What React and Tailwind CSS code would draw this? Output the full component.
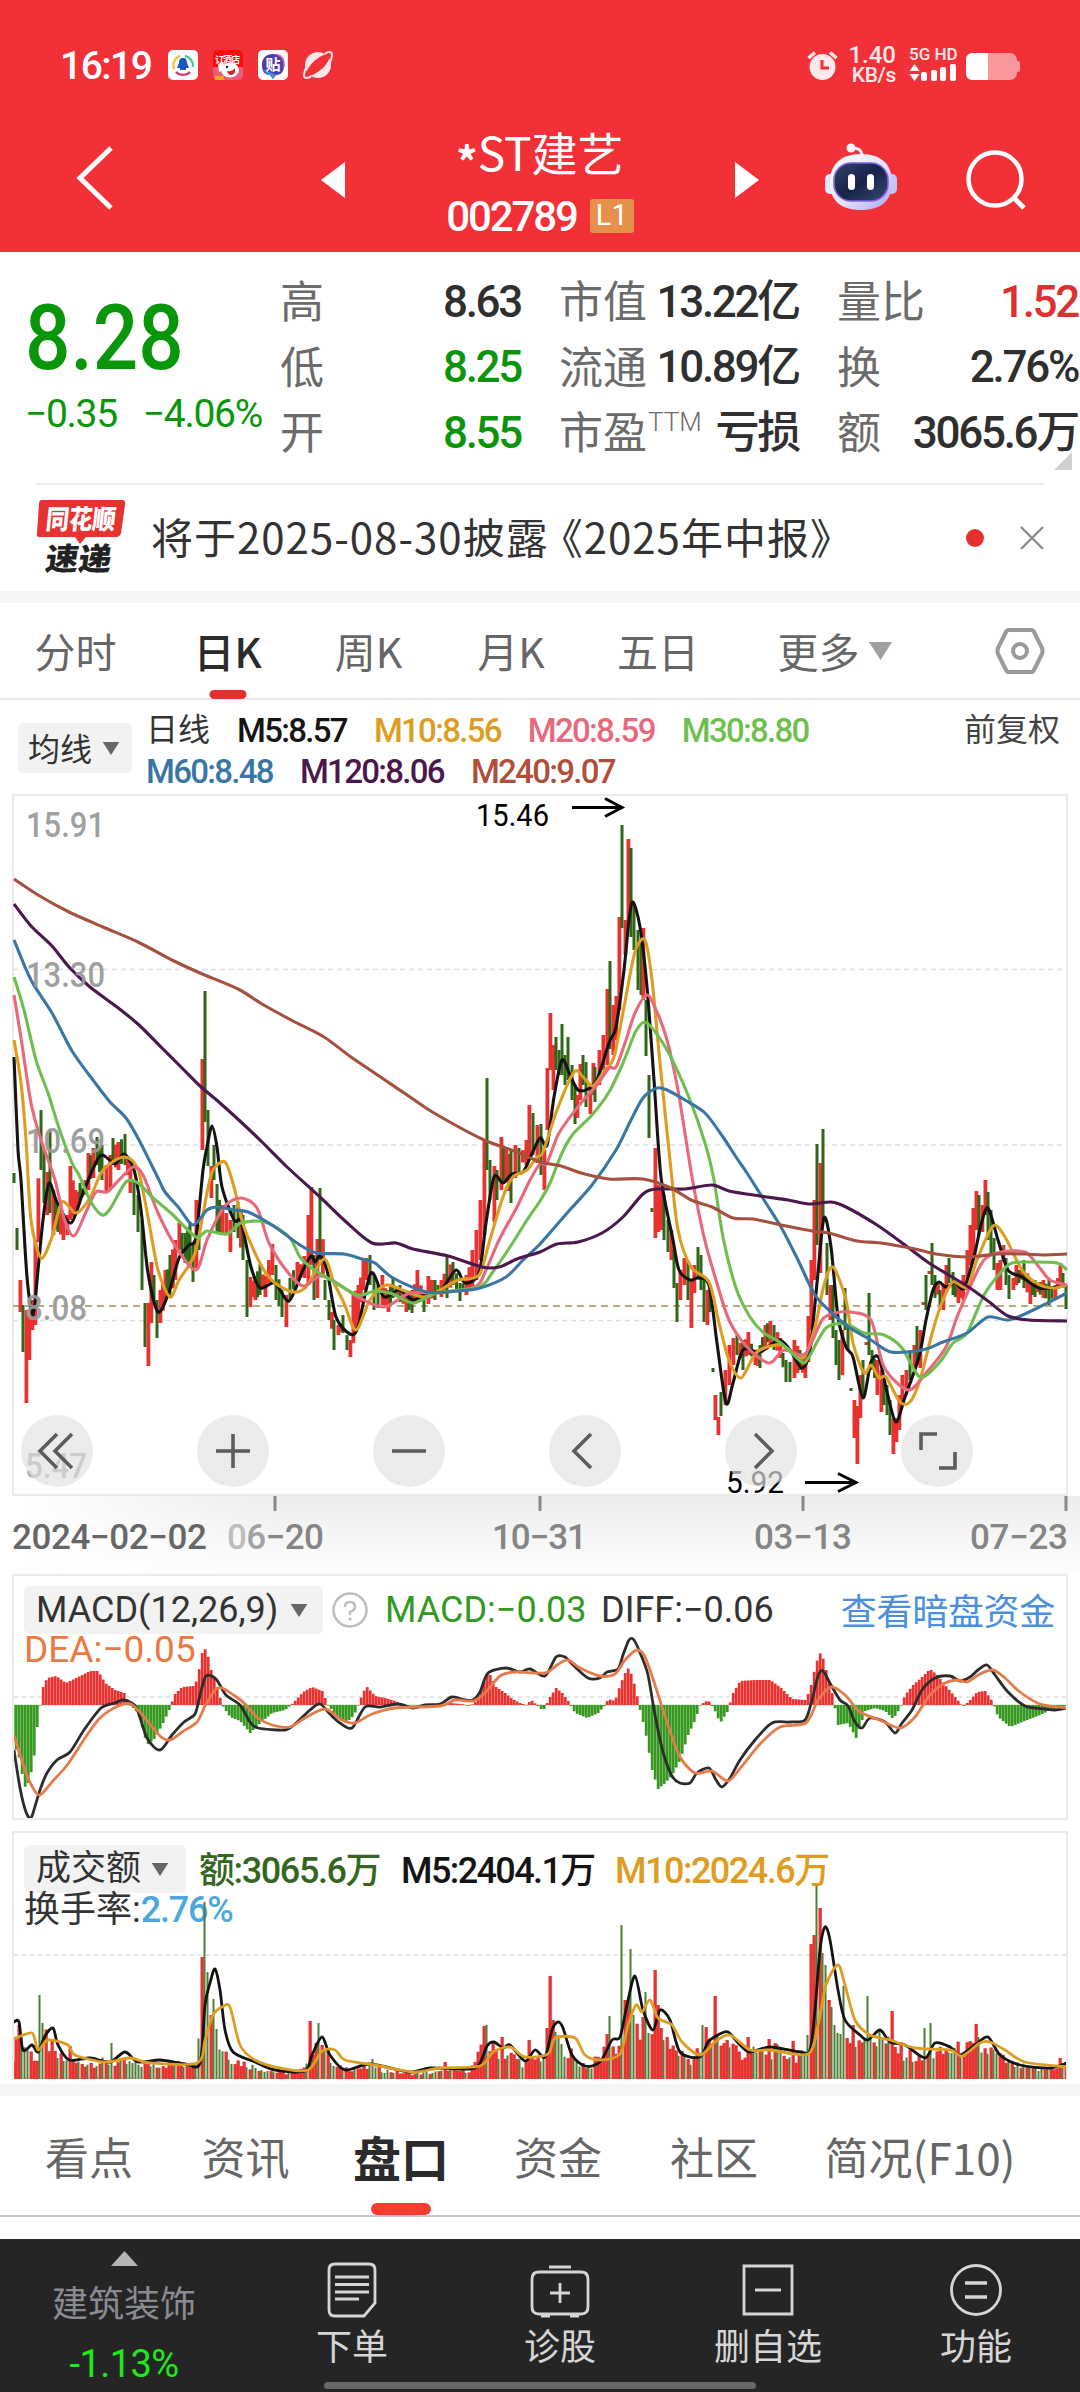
import React from 'react';
import clsx from 'clsx';

const RED = '#e73230';
const GREEN = '#2f6618';

// moving averages of the K chart, as x,y points
const maLines = [
  {
    color: '#141414',
    points:
      '14,1057 18,1150 21,1180 27,1277 33,1315 38,1270 43,1220 49,1183 57,1202 71,1223 83,1193 100,1156 115,1164 124,1154 134,1170 141,1210 148,1273 158,1312 169,1292 179,1258 189,1245 196,1237 203,1170 207,1147 212,1126 217,1147 222,1187 234,1220 241,1222 251,1267 260,1288 275,1283 289,1301 303,1270 311,1256 315,1262 320,1256 327,1270 336,1317 350,1334 358,1327 371,1273 384,1297 399,1290 413,1300 425,1294 441,1290 456,1270 465,1283 479,1273 486,1223 494,1177 503,1183 512,1174 523,1172 530,1158 540,1138 547,1145 554,1097 562,1060 570,1075 578,1090 588,1089 597,1080 609,1043 616,1027 624,970 629,920 633,902 640,927 647,987 654,1080 661,1177 673,1240 679,1270 690,1280 698,1278 709,1285 717,1343 726,1403 733,1383 743,1350 760,1352 779,1340 790,1350 802,1368 810,1350 817,1283 824,1218 831,1247 838,1317 846,1347 853,1357 863,1398 871,1362 879,1358 887,1392 896,1422 905,1397 919,1357 926,1320 933,1290 939,1282 946,1287 955,1283 964,1288 974,1257 981,1225 988,1208 998,1240 1008,1270 1022,1277 1039,1288 1057,1287 1067,1285',
  },
  {
    color: '#dd9d22',
    points:
      '14,1040 21,1083 26,1140 31,1220 41,1258 52,1237 62,1202 76,1213 90,1198 103,1170 124,1157 138,1170 148,1217 158,1270 170,1297 179,1280 195,1253 207,1193 213,1170 225,1162 234,1187 244,1227 262,1267 275,1283 293,1292 306,1287 324,1259 334,1283 344,1303 356,1330 370,1300 386,1285 405,1291 424,1297 440,1290 458,1280 479,1275 489,1243 503,1197 513,1177 527,1170 537,1157 543,1152 557,1110 574,1072 584,1078 593,1086 605,1070 614,1057 624,1007 635,952 645,940 652,980 660,1063 671,1170 678,1230 691,1267 709,1282 719,1323 729,1360 741,1378 757,1352 781,1345 803,1358 815,1327 824,1285 833,1267 846,1300 853,1343 864,1373 871,1365 879,1378 886,1377 900,1402 910,1402 920,1380 933,1330 943,1300 953,1282 967,1287 977,1260 993,1226 1005,1237 1022,1270 1038,1284 1053,1288 1067,1285',
  },
  {
    color: '#e7697b',
    points:
      '14,995 21,1038 31,1103 41,1140 55,1180 64,1218 74,1236 86,1212 96,1192 107,1192 119,1180 133,1167 143,1175 158,1213 176,1247 196,1270 207,1240 224,1207 241,1198 257,1208 269,1243 286,1270 303,1286 320,1276 337,1283 358,1297 384,1307 410,1293 437,1293 475,1287 486,1270 499,1240 517,1207 530,1180 540,1164 547,1163 559,1133 581,1103 597,1085 609,1068 616,1067 626,1040 635,1013 647,995 657,1012 667,1040 678,1090 692,1177 704,1237 716,1280 729,1320 747,1347 769,1363 784,1350 805,1354 822,1320 836,1313 850,1312 871,1320 884,1367 908,1390 926,1373 946,1347 957,1317 970,1287 984,1260 1001,1252 1025,1252 1039,1267 1050,1280 1067,1285',
  },
  {
    color: '#6fbf50',
    points:
      '14,977 24,1010 36,1060 48,1093 59,1128 72,1163 79,1175 91,1202 102,1215 110,1209 126,1182 138,1183 152,1197 172,1214 196,1237 207,1231 227,1234 241,1223 265,1222 289,1237 300,1257 313,1269 331,1280 358,1295 375,1291 393,1294 413,1303 437,1293 479,1287 492,1273 510,1247 527,1220 540,1201 550,1183 562,1153 573,1134 592,1115 609,1092 623,1063 636,1031 647,1023 667,1050 688,1095 705,1143 714,1180 723,1237 736,1288 750,1317 764,1333 781,1343 802,1362 809,1357 826,1328 846,1324 864,1333 884,1335 902,1348 920,1377 939,1363 953,1343 967,1333 984,1295 1001,1272 1012,1263 1030,1262 1057,1263 1067,1270',
  },
  {
    color: '#3a76a3',
    points:
      '14,940 31,980 52,1013 72,1051 93,1080 110,1102 126,1118 139,1140 158,1178 165,1192 179,1208 193,1225 207,1210 217,1207 234,1210 248,1212 272,1225 300,1245 317,1253 344,1254 362,1259 375,1263 393,1278 427,1292 458,1291 480,1288 506,1277 523,1260 540,1244 568,1212 592,1185 616,1150 630,1122 643,1098 657,1088 667,1090 685,1100 705,1113 723,1137 736,1157 747,1173 764,1200 781,1227 798,1260 815,1295 833,1314 850,1328 871,1340 891,1352 922,1350 943,1342 967,1333 988,1317 1008,1320 1029,1312 1067,1293',
  },
  {
    color: '#4b174d',
    points:
      '14,904 31,926 52,946 69,967 90,987 117,1007 139,1025 162,1048 183,1069 200,1086 220,1103 241,1122 262,1142 286,1166 320,1197 344,1220 372,1243 396,1243 413,1249 448,1256 482,1267 499,1267 517,1259 540,1252 557,1244 578,1242 602,1233 623,1217 643,1194 657,1189 685,1189 712,1185 729,1191 760,1196 788,1200 809,1204 831,1202 846,1207 877,1225 905,1245 929,1263 967,1286 988,1301 1008,1316 1029,1320 1067,1321',
  },
  {
    color: '#a4523f',
    points:
      '14,879 38,895 69,912 103,927 138,942 172,960 200,973 238,989 262,1004 293,1021 324,1037 351,1057 382,1078 413,1099 434,1113 482,1139 517,1152 540,1162 561,1166 581,1173 609,1179 643,1179 671,1188 691,1200 712,1207 733,1218 753,1219 781,1225 812,1231 829,1233 857,1241 881,1243 915,1249 936,1254 967,1257 998,1254 1025,1254 1043,1255 1067,1254',
  },
];

// x, high, low, r(ise) / g(fall)
const candleData = `14,1173,1183,g 17,1228,1250,g 20,1280,1312,r 23,1305,1352,g 26,1310,1403,r 29,1315,1360,r 32,1300,1330,r 35,1240,1325,r
41,1110,1170,g 44,1150,1203,g 47,1172,1215,r 50,1130,1213,g 53,1190,1235,r 58,1205,1232,g 63,1215,1240,r 67,1215,1235,r 70,1166,1220,r 75,1190,1215,r
80,1183,1200,g 85,1180,1195,r 88,1153,1190,r 93,1148,1178,r 97,1137,1165,g 102,1145,1180,g 106,1165,1192,r 110,1155,1188,r 113,1138,1165,g 118,1142,1170,r
125,1134,1165,g 130,1165,1193,r 134,1180,1215,g 138,1195,1232,g 142,1220,1290,g 145,1303,1347,g 148,1303,1366,r 151,1262,1323,r 154,1275,1300,g 157,1300,1338,g
160,1290,1323,r 165,1270,1300,r 170,1255,1298,g 175,1240,1280,r 179,1223,1250,r 185,1233,1263,g 190,1222,1265,g 193,1245,1282,g 196,1200,1268,r 199,1225,1250,g
202,1059,1150,r 205,991,1122,g 208,1110,1166,g 211,1166,1198,r 214,1145,1180,g 217,1184,1232,g 222,1205,1235,r 226,1213,1235,r 230,1220,1252,r 234,1205,1232,g
238,1202,1238,g 243,1215,1260,g 247,1260,1317,g 250,1277,1307,r 255,1276,1300,r 260,1264,1295,g 265,1276,1297,r 272,1244,1275,r 276,1265,1300,g 282,1290,1317,g
286,1295,1327,r 290,1278,1300,g 297,1262,1285,r 304,1256,1278,r 308,1215,1285,r 311,1187,1265,r 314,1255,1300,g 317,1239,1298,r 320,1188,1260,g 325,1280,1300,g
329,1300,1320,g 334,1320,1350,g 338,1325,1335,r 343,1315,1333,g 347,1335,1350,g 350,1340,1357,r 353,1295,1343,r 358,1285,1320,r 363,1258,1290,r 366,1258,1280,r
370,1255,1285,g 374,1275,1310,g 378,1285,1308,g 382,1275,1305,r 388,1290,1312,r 393,1278,1298,g 400,1285,1302,g 406,1292,1312,r 412,1290,1313,g 417,1270,1300,r
424,1290,1312,g 428,1276,1304,r 435,1280,1300,g 441,1280,1297,r 447,1257,1298,g 453,1262,1285,g 460,1283,1301,g 466,1275,1295,r 472,1250,1290,r 476,1230,1280,r
480,1200,1260,r 484,1140,1235,r 487,1078,1170,g 490,1160,1200,g 494,1166,1222,r 497,1170,1200,g 501,1137,1190,r 506,1147,1180,r 511,1150,1203,g 515,1145,1178,r
519,1148,1172,g 526,1140,1165,r 529,1105,1160,r 533,1113,1155,g 537,1125,1163,r 541,1124,1175,g 544,1150,1190,r 547,1068,1130,r 550,1013,1070,r 553,1045,1090,r
556,1037,1070,g 559,1050,1075,g 562,1024,1075,g 565,1055,1085,g 568,1037,1080,g 572,1065,1100,g 575,1085,1124,g 577,1095,1118,r 580,1064,1100,r 583,1055,1085,g
586,1062,1107,g 590,1085,1114,r 593,1063,1095,r 595,1067,1102,g 599,1050,1085,r 603,1035,1070,r 607,989,1065,r 610,961,1049,g 613,1005,1055,r 616,996,1040,r
619,917,1010,r 622,825,928,g 625,920,955,r 628,839,925,r 631,848,937,g 634,905,950,g 638,930,990,g 641,940,995,g 643,928,1000,r 646,1000,1056,g
649,1075,1138,g 652,1208,1212,g 655,1148,1238,r 658,1185,1232,r 661,1190,1230,r 664,1195,1240,g 668,1220,1252,g 671,1230,1260,r 674,1250,1288,g 677,1283,1322,g
680,1270,1300,r 684,1258,1285,r 688,1262,1300,g 691,1280,1328,r 694,1265,1293,r 698,1247,1278,g 701,1255,1290,g 704,1280,1322,g 707,1290,1325,r 710,1285,1312,g
713,1368,1372,g 715,1395,1420,r 718,1417,1435,r 721,1392,1416,g 725,1370,1405,r 729,1345,1385,r 733,1338,1365,r 737,1335,1355,g 743,1340,1370,g 748,1332,1355,r
755,1350,1365,r 760,1345,1368,g 765,1325,1350,r 770,1321,1345,r 774,1325,1350,g 780,1338,1358,r 786,1360,1382,g 790,1362,1382,g 794,1340,1378,r 800,1350,1370,g
805,1355,1378,r 808,1316,1362,r 811,1260,1330,r 814,1200,1280,r 817,1144,1245,g 820,1163,1273,r 823,1129,1220,g 827,1243,1295,g 830,1285,1320,r 833,1285,1338,g
836,1330,1365,g 839,1340,1380,g 842,1330,1375,r 845,1288,1330,g 848,1325,1350,g 851,1388,1391,g 854,1400,1438,r 857,1406,1464,r 860,1375,1418,r 863,1360,1395,g
866,1342,1345,r 869,1293,1355,g 872,1350,1370,g 877,1360,1395,r 881,1370,1412,r 884,1380,1405,g 887,1385,1415,g 890,1400,1435,g 893,1418,1454,r 896,1418,1442,r
899,1395,1430,r 902,1375,1405,r 906,1370,1390,r 910,1350,1380,g 914,1345,1368,r 917,1326,1365,g 920,1330,1368,r 923,1302,1304,r 926,1275,1310,g 929,1271,1273,r
932,1243,1285,g 935,1275,1298,g 940,1290,1305,g 943,1285,1310,r 946,1265,1290,r 949,1258,1283,g 953,1272,1295,g 958,1285,1303,r 963,1275,1300,r 967,1250,1290,r
970,1225,1265,r 973,1208,1260,r 976,1191,1230,r 979,1195,1235,g 982,1205,1232,r 985,1180,1215,r 988,1192,1240,g 991,1210,1255,g 994,1238,1270,g 997,1263,1290,r
1000,1260,1290,r 1003,1245,1262,r 1006,1258,1285,g 1009,1275,1299,g 1013,1278,1290,r 1016,1265,1285,r 1019,1270,1283,g 1024,1260,1288,g 1030,1283,1304,r 1035,1280,1297,g
1043,1280,1298,r 1049,1280,1305,g 1055,1285,1300,r 1060,1263,1285,r 1063,1273,1285,g 1066,1285,1309,g`;

const macdHist =
  '12,-34 20,-55 24,-83 28,-78 33,-60 37,-22 40,0 43,18 47,27 56,29 66,22 78,28 90,34 98,34 105,22 115,15 124,12 130,0 138,-8 147,-40 155,-33 163,-18 170,-3 174,10 182,18 193,19 197,25 202,52 206,57 211,35 217,18 222,0 230,-12 240,-16 250,-28 260,-18 272,-8 285,-5 293,2 303,13 312,18 322,14 328,0 337,-12 347,-17 354,-10 360,5 366,19 375,9 385,7 395,4 405,0 425,-1 440,0 450,2 462,1 470,-1 476,4 482,18 488,34 496,18 505,12 512,6 520,2 526,0 531,5 537,0 543,-6 550,8 556,17 562,12 568,4 575,-8 587,-13 598,-8 605,0 608,6 615,4 620,20 625,32 629,38 635,18 640,-5 645,-25 652,-65 658,-84 665,-78 672,-70 680,-55 688,-30 695,-15 700,0 708,5 714,-4 720,-18 727,-7 733,12 740,24 755,25 770,25 780,18 792,6 806,5 811,20 816,42 821,54 826,35 833,8 838,-20 848,-18 856,-33 865,-6 875,-3 885,-6 893,-14 900,-3 905,10 913,20 922,28 930,36 937,30 945,20 955,8 963,-2 970,5 977,13 985,14 992,4 998,-12 1010,-22 1022,-17 1040,-10 1050,-5 1066,-1';
const diffLine =
  '14,1750 20,1788 26,1812 31,1818 36,1803 41,1787 47,1773 57,1760 70,1752 84,1730 101,1708 115,1703 124,1700 136,1707 147,1738 160,1750 172,1735 184,1722 195,1714 200,1695 206,1676 216,1679 226,1695 240,1705 250,1722 258,1728 285,1730 295,1724 310,1710 320,1704 330,1714 340,1723 352,1728 365,1707 380,1707 398,1704 413,1708 425,1705 440,1704 452,1697 465,1700 473,1700 480,1692 488,1673 506,1668 520,1672 530,1669 545,1676 556,1657 565,1657 573,1665 588,1678 600,1678 607,1672 618,1669 623,1655 629,1640 634,1640 641,1655 648,1675 655,1715 663,1752 672,1776 680,1783 690,1783 697,1773 709,1768 716,1780 722,1787 730,1778 740,1760 755,1740 772,1723 790,1722 805,1720 812,1700 818,1676 823,1671 831,1685 840,1700 848,1706 855,1722 862,1728 870,1718 885,1722 895,1733 902,1723 912,1710 922,1690 935,1678 950,1676 960,1681 970,1677 978,1670 987,1665 995,1675 1008,1692 1025,1706 1045,1709 1055,1710 1067,1708';
const deaLine =
  '14,1735 25,1770 33,1788 40,1795 52,1782 68,1764 85,1738 100,1718 118,1706 131,1704 145,1718 160,1736 170,1740 182,1732 197,1722 205,1706 215,1690 222,1688 235,1696 245,1704 258,1718 272,1725 290,1727 305,1718 325,1709 342,1720 355,1723 372,1714 395,1708 440,1706 455,1700 473,1701 485,1693 500,1676 515,1672 545,1673 557,1665 568,1660 580,1668 600,1676 615,1674 625,1660 637,1650 645,1657 655,1685 668,1725 680,1757 695,1773 712,1771 728,1781 742,1766 760,1744 780,1727 806,1723 818,1700 831,1687 845,1695 860,1712 880,1720 900,1728 915,1717 930,1695 945,1683 958,1680 967,1682 980,1674 993,1670 1005,1678 1020,1692 1040,1704 1067,1708';

const vol5 =
  '14,2022 19,2022 23,2050 32,2045 38,2052 45,2036 53,2028 58,2045 69,2060 90,2058 110,2062 125,2052 138,2062 160,2060 185,2064 200,2063 205,2005 210,1983 215,1969 220,1990 225,2030 233,2052 255,2062 275,2070 305,2071 312,2055 322,2037 330,2055 345,2070 370,2064 410,2072 430,2068 470,2069 480,2063 487,2046 494,2042 503,2048 510,2045 525,2061 535,2050 545,2057 552,2030 558,2022 563,2028 572,2055 585,2066 600,2062 612,2040 620,2037 627,2005 635,1976 643,2010 653,2030 660,2010 670,2020 680,2052 700,2057 708,2042 718,2035 728,2032 740,2045 750,2052 770,2047 800,2052 810,2050 815,2010 820,1950 825,1927 830,1940 838,1990 845,2020 860,2035 868,2040 880,2030 890,2042 905,2045 925,2058 935,2043 950,2047 960,2055 975,2045 988,2037 1000,2055 1020,2065 1050,2068 1067,2063';
const vol10 =
  '14,2039 32,2033 38,2050 48,2040 68,2045 75,2055 105,2062 130,2058 150,2063 197,2063 205,2040 213,2015 222,2007 230,2007 240,2045 255,2060 280,2068 308,2070 322,2051 335,2050 345,2060 375,2065 413,2072 440,2068 480,2066 493,2052 510,2047 525,2057 548,2054 555,2038 575,2038 585,2055 600,2060 620,2054 628,2025 636,2005 642,2012 650,2000 658,2018 672,2025 682,2042 700,2055 715,2042 730,2035 750,2050 770,2050 808,2054 818,2025 826,1985 838,1965 845,1985 855,2020 870,2035 890,2040 915,2048 950,2050 962,2056 980,2043 990,2042 1005,2050 1025,2062 1067,2067';
// level of the everyday volume bars, the big days are in volSpikes
const volBase =
  '14,2050 20,2035 30,2052 37,2058 45,2035 55,2055 70,2063 110,2062 140,2064 195,2064 202,2030 220,2045 235,2060 255,2067 280,2073 300,2073 310,2050 325,2050 335,2068 370,2068 410,2074 470,2070 485,2045 510,2055 525,2063 545,2055 560,2038 575,2060 590,2067 605,2050 620,2045 635,2035 650,2040 670,2045 690,2060 705,2045 720,2037 745,2055 770,2050 805,2057 811,2010 820,2000 830,2020 845,2035 870,2035 890,2045 920,2060 950,2050 975,2048 990,2050 1010,2064 1040,2070 1066,2064';
const volSpikes = `19,2025,r 40,1995,g 43,2023,g 70,2046,r 112,2043,g 202,1957,r 205,1902,g 208,1972,g 211,2015,r 214,1999,g 217,2029,g 310,2021,r 320,2023,g 323,2045,r
373,2059,g 445,2062,r 485,2026,r 488,2025,g 501,2037,r 530,2040,r 547,2028,r 550,1976,r 553,2020,r 556,2032,g 562,2044,g 607,2034,r 610,2016,g 622,1925,g 625,2000,r 628,2000,r 631,1949,g 634,2015,g 643,2017,r
646,1992,g 649,2033,g 655,1970,r 658,2005,r 661,2028,r 664,2040,g 702,2025,g 705,2027,r 715,1996,r 748,2037,r 768,2039,r 793,2041,r 811,1944,r 814,1935,r 817,1886,g 820,1908,r 823,1953,g 826,1965,g 829,2000,r
832,2007,g 835,2025,g 838,2033,g 845,1986,g 853,2025,r 868,1996,g 880,2030,g 892,2011,r 925,2028,g 931,2023,g 976,2024,r 979,2037,g 1060,2058,r`;

const parsePoints = (str) => str.trim().split(/\s+/).map((p) => p.split(',').map(Number));
const parseBars = (str) =>
  str.trim().split(/\s+/).map((p) => {
    const [x, a, b, c] = p.split(',');
    return c ? { x: +x, top: +a, bottom: +b, up: c === 'r' } : { x: +x, top: +a, up: b === 'r' };
  });

const valueAt = (pts, x) => {
  for (let i = 1; i < pts.length; i++) {
    if (x <= pts[i][0]) {
      const [x0, y0] = pts[i - 1];
      const [x1, y1] = pts[i];
      return y0 + ((y1 - y0) * (x - x0)) / (x1 - x0);
    }
  }
  return pts[pts.length - 1][1];
};

// stable pseudo random, 0..1
const rnd = (n) => {
  const v = Math.sin(n * 12.9898) * 43758.5453;
  return v - Math.floor(v);
};

// smooth path through the points
const smooth = (str) => {
  const p = parsePoints(str);
  let d = `M${p[0][0]} ${p[0][1]}`;
  for (let i = 0; i < p.length - 1; i++) {
    const a = p[i - 1] || p[i];
    const b = p[i];
    const c = p[i + 1];
    const e = p[i + 2] || c;
    const k = 7;
    d += `C${b[0] + (c[0] - a[0]) / k} ${b[1] + (c[1] - a[1]) / k} ${c[0] - (e[0] - b[0]) / k} ${c[1] - (e[1] - b[1]) / k} ${c[0]} ${c[1]}`;
  }
  return d;
};

// fill the days between two listed candles
const buildCandles = () => {
  const list = parseBars(candleData);
  const out = [];
  list.forEach((c, i) => {
    out.push(c);
    const n = list[i + 1];
    if (!n) return;
    const gap = n.x - c.x;
    if (gap < 5) return;
    const steps = Math.round(gap / 3);
    for (let s = 1; s < steps; s++) {
      const t = s / steps;
      const x = c.x + gap * t;
      out.push({
        x,
        top: c.top + (n.top - c.top) * t + rnd(x) * 7,
        bottom: c.bottom + (n.bottom - c.bottom) * t - rnd(x + 1) * 7,
        up: rnd(x + 2) > 0.5,
      });
    }
  });
  return out;
};

const candles = buildCandles();
const histPts = parsePoints(macdHist);
const basePts = parsePoints(volBase);
const spikes = parseBars(volSpikes);
const days = Array.from({ length: 352 }, (_, i) => 13 + i * 3);

const volumes = days.map((x, i) => {
  const spike = spikes.find((s) => Math.abs(s.x - x) < 1.5);
  if (spike) return { x, top: spike.top, up: spike.up };
  const h = 2078 - valueAt(basePts, x);
  return { x, top: 2078 - h * (0.65 + rnd(i) * 0.65), up: rnd(i + 500) > 0.42 };
});

const num = "font-['Roboto','Noto_Sans_CJK_SC',sans-serif]";
const cjk = "font-['Noto_Sans_CJK_SC',sans-serif]";

function Caret({ className }) {
  return (
    <svg className={className} viewBox="0 0 18 14">
      <path d="M0 0H18L9 14Z" fill="currentColor" />
    </svg>
  );
}

function StatusBar() {
  return (
    <div className="flex h-[130px] items-start pt-[47px] pr-[60px] pl-[60px] text-white">
      <span className={clsx(num, 'w-[108px] text-[39px] leading-[38px] font-medium tracking-[-1.5px]')}>16:19</span>
      <div className="mt-[3px] flex gap-[15px]">
        <svg className="size-[30px]" viewBox="0 0 30 30">
          <rect width="30" height="30" rx="5" fill="#fff" />
          <path d="M6 19A10 10 0 0 1 12 6" fill="none" stroke="#e8c93c" strokeWidth="2.4" />
          <path d="M17 6A10 10 0 0 1 25 17" fill="none" stroke="#4fc59b" strokeWidth="2.4" />
          <path d="M8 22A10 10 0 0 0 22 22" fill="none" stroke="#d03a6c" strokeWidth="2.4" />
          <path d="M15 8c-3 0-4 2-4 5l-2 5h3v2h6v-2h3l-2-5c0-3-1-5-4-5Z" fill="#1456c4" />
        </svg>
        <svg className="size-[30px]" viewBox="0 0 30 30">
          <rect width="30" height="30" rx="5" fill="#fb0d0d" />
          <path d="M0 17H30V25Q30 30 25 30H5Q0 30 0 25Z" fill="#ec5b78" />
          <text x="2" y="13" fontSize="9" fontWeight="700" fill="#fff" fontFamily="Noto Sans CJK SC" textLength="25">订酒店</text>
          <ellipse cx="17" cy="20" rx="9" ry="7.5" fill="#fff" />
          <path d="M5 14l5-2 2 7-6 3Z" fill="#fff" />
          <circle cx="14" cy="17" r="1.2" fill="#222" />
          <path d="M14 21q5 1 8-3q1 7-4 7q-3 0-4-4Z" fill="#c62828" />
          <rect x="2" y="26" width="9" height="4" fill="#f5a623" />
        </svg>
        <svg className="size-[30px]" viewBox="0 0 30 30">
          <rect width="30" height="30" rx="5" fill="#fff" />
          <path d="M15 4C22 4 26 7 26 15S22 25 18 25L15 29L12 25C7 25 4 22 4 15S8 4 15 4Z" fill="#4d3fa8" />
          <path d="M5 19Q8 25 12 25L15 29L18 25" fill="#3e8fe8" />
          <path d="M20 5Q27 7 26 17" fill="none" stroke="#e25fb0" strokeWidth="1.6" />
          <text x="7.5" y="20" fontSize="15" fontWeight="700" fill="#fff" fontFamily="Noto Sans CJK SC">贴</text>
        </svg>
        <svg className="size-[30px]" viewBox="0 0 30 30">
          <circle cx="15" cy="15" r="13" fill="#ffe6e8" />
          <ellipse cx="15" cy="15" rx="14.500" ry="5.500" transform="rotate(-42 15 15)" fill="#f23038" />
          <path d="M22 3.500Q29 0 29 5Q29 9 26 14" fill="none" stroke="#ffe6e8" strokeWidth="2" />
          <path d="M8 26.500Q1 30 1 25Q1 21 4 16" fill="none" stroke="#ffe6e8" strokeWidth="2" />
        </svg>
      </div>
      <svg className="mt-[4px] ml-auto h-[30px] w-[31px]" viewBox="0 0 31 30">
        <circle cx="15.500" cy="16" r="13" fill="#ffe9ea" />
        <path d="M1.500 7L8 1.500M29.500 7L23 1.500" stroke="#ffe9ea" strokeWidth="3.600" />
        <path d="M15 9V17H22" fill="none" stroke="#f23038" strokeWidth="3" />
      </svg>
      <div className={clsx(num, 'mt-[-2px] ml-[10px] w-[48px] text-right text-[24px] leading-[20px] font-medium text-[#ffe9ea]')}>
        <div>1.40</div>
        <div className="text-[21px] tracking-[-0.3px]">KB/s</div>
      </div>
      <div className="ml-[13px] w-[48px]">
        <div className={clsx(num, 'text-[17px] leading-[15px] font-medium whitespace-nowrap text-[#ffe9ea]')}>5G HD</div>
        <svg className="mt-[2px] h-[17px] w-[48px]" viewBox="0 0 48 17" fill="#fff">
          <path d="M5.500 0L10.500 7H.5ZM5.500 17L10.500 10H.5Z" />
          <rect x="12" y="8" width="6" height="9" rx="2" />
          <rect x="22" y="6" width="6" height="11" rx="2" />
          <rect x="31" y="3" width="6" height="14" rx="2" />
          <rect x="41" y="0" width="6" height="17" rx="2" />
        </svg>
      </div>
      <svg className="mt-[6px] ml-[9px] h-[27px] w-[54px]" viewBox="0 0 54 27">
        <rect width="51" height="27" rx="7" fill="#f8979c" />
        <rect x="50" y="8" width="4" height="11" rx="2" fill="#f8979c" />
        <path d="M22 0H7Q0 0 0 7V20Q0 27 7 27H22Z" fill="#fff" />
      </svg>
    </div>
  );
}

function TitleBar() {
  return (
    <div className="flex h-[122px] items-start pl-[76px] text-white">
      <svg className="mt-[15px] h-[66px] w-[38px]" viewBox="0 0 38 66">
        <path d="M35 3L4 33L35 63" fill="none" stroke="#fff" strokeWidth="5" />
      </svg>
      <svg className="mt-[32px] ml-[207px] h-[36px] w-[24px]" viewBox="0 0 24 36">
        <path d="M24 0V36L0 18Z" fill="#fff" />
      </svg>
      <div className="ml-[95px] flex w-[200px] flex-col items-center">
        <div className={clsx(cjk, 'flex h-[62px] items-start text-[46px] leading-[43px] whitespace-nowrap')}>
          <span className="mt-[8px] text-[42px] font-bold">*</span>ST建艺
        </div>
        <div className="flex items-center gap-[13px]">
          <span className={clsx(num, 'pt-[2px] text-[42px] leading-[46px] font-medium tracking-[-2.1px]')}>002789</span>
          <span className={clsx(num, 'flex h-[34px] w-[44px] items-center justify-center rounded-[3px] bg-[#e5904b] text-[29px]')}>L1</span>
        </div>
      </div>
      <svg className="mt-[32px] ml-[95px] h-[36px] w-[24px]" viewBox="0 0 24 36">
        <path d="M0 0V36L24 18Z" fill="#fff" />
      </svg>
      <svg className="mt-[13px] ml-[65px] h-[68px] w-[74px]" viewBox="0 0 74 68">
        <defs>
          <linearGradient id="shell" x1="0" y1="0" x2="1" y2="1">
            <stop offset="0" stopColor="#ffffff" />
            <stop offset=".55" stopColor="#e4e2fb" />
            <stop offset="1" stopColor="#a9a4ec" />
          </linearGradient>
          <linearGradient id="visor" x1="0" y1="0" x2="1" y2="1">
            <stop offset="0" stopColor="#35456b" />
            <stop offset=".5" stopColor="#16224a" />
            <stop offset="1" stopColor="#3a4b74" />
          </linearGradient>
        </defs>
        <path d="M26 5Q38 4 38 13" fill="none" stroke="#ecebfb" strokeWidth="3" />
        <circle cx="27" cy="5" r="4.500" fill="#f5f4ff" />
        <rect x="1" y="31" width="12" height="20" rx="5" fill="#e6e4fb" />
        <rect x="61" y="31" width="12" height="20" rx="5" fill="#c6c5f6" />
        <path d="M37 11C58 11 68 22 68 39C68 58 57 67 37 67C17 67 6 58 6 39C6 22 16 11 37 11Z" fill="url(#shell)" />
        <rect x="10" y="20" width="54" height="38" rx="17" fill="url(#visor)" stroke="#7f62dc" strokeWidth="1.600" />
        <rect x="24" y="31" width="7" height="16" rx="3.500" fill="#fff" />
        <rect x="43" y="31" width="7" height="16" rx="3.500" fill="#fff" />
      </svg>
      <svg className="mt-[19px] ml-[68px] h-[62px] w-[62px]" viewBox="0 0 62 62">
        <circle cx="29" cy="30" r="26.500" fill="none" stroke="#fff" strokeWidth="4.500" />
        <path d="M48 49L58 59" stroke="#fff" strokeWidth="5" />
      </svg>
    </div>
  );
}

const quoteCols = [
  {
    width: 'w-[241px]',
    rows: [
      ['高', '8.63', 'text-[#2f2f2f]'],
      ['低', '8.25', 'text-[#0d940d]'],
      ['开', '8.55', 'text-[#0d940d]'],
    ],
  },
  {
    width: 'w-[240px]',
    rows: [
      ['市值', '13.22亿', 'text-[#2f2f2f]'],
      ['流通', '10.89亿', 'text-[#2f2f2f]'],
      ['市盈', '亏损', 'text-[#2f2f2f]', 'TTM'],
    ],
  },
  {
    width: 'w-[241px]',
    rows: [
      ['量比', '1.52', 'text-[#dd3030]'],
      ['换', '2.76%', 'text-[#2f2f2f]'],
      ['额', '3065.6万', 'text-[#2f2f2f]'],
    ],
  },
];

function Quote() {
  return (
    <div className="relative flex h-[231px] pt-[17px]">
      <div className={clsx(num, 'w-[280px] pl-[25px] font-medium text-[#0a960a]')}>
        <div className="h-[116px] origin-left scale-x-[0.88] text-[91px] leading-[138px]">8.28</div>
        <div className="mt-[9px] flex gap-[26px] text-[39px] leading-[40px] font-normal tracking-[-1.3px] whitespace-nowrap">
          <span>−0.35</span>
          <span>−4.06%</span>
        </div>
      </div>
      {quoteCols.map((col, i) => (
        <div key={i} className={clsx(col.width, i > 0 && 'ml-[38px]')}>
          {col.rows.map(([label, value, color, sup]) => (
            <div key={label} className="flex h-[65.500px] items-center justify-between">
              <div className={clsx(cjk, 'mt-[-5px] flex text-[44px] leading-[60px] whitespace-nowrap text-[#6b6b6b]')}>
                {label}
                {sup && <span className={clsx(num, 'mt-[-8px] ml-[1px] text-[26px] font-light')}>{sup}</span>}
              </div>
              <div className={clsx(num, color, 'text-[44px] leading-[60px] font-medium tracking-[-2.3px] whitespace-nowrap')}>{value}</div>
            </div>
          ))}
        </div>
      ))}
      <svg className="absolute top-[200px] right-[8px] size-[18px]" viewBox="0 0 18 18">
        <path d="M18 0V18H0Z" fill="#cfcfcf" />
      </svg>
    </div>
  );
}

function Notice() {
  return (
    <div className="mx-[36px] flex h-[108px] items-center border-t-2 border-[#ededed]">
      <svg className="mt-[-2px] h-[74px] w-[90px] overflow-visible" viewBox="0 0 90 74">
        <path d="M6 0H86Q90 0 89 5L85 33Q84 37 80 37H50L44 44L39 37H4Q0 37 1 33L3 4Q3 0 6 0Z" fill="#e73232" />
        <text x="9" y="29" fontSize="27" fontWeight="900" fill="#fff" fontFamily="Noto Sans CJK SC" textLength="70" lengthAdjust="spacingAndGlyphs" transform="skewX(-6) translate(3 0)">同花顺</text>
        <text x="9" y="70" fontSize="31" fontWeight="900" fill="#222" fontFamily="Noto Sans CJK SC" textLength="66" lengthAdjust="spacingAndGlyphs" transform="skewX(-8) translate(9 0)">速递</text>
      </svg>
      <span className={clsx(cjk, 'mt-[-5px] ml-[25px] text-[42px] tracking-[1px] whitespace-nowrap text-[#333]')}>
        将于2025-08-30披露<span className="ml-[-8px]">《2025年中报》</span>
      </span>
      <span className="ml-auto size-[18px] rounded-full bg-[#e63030]" />
      <svg className="ml-[36px] size-[24px]" viewBox="0 0 24 24">
        <path d="M1 1L23 23M23 1L1 23" stroke="#8c8c8c" strokeWidth="2.400" />
      </svg>
    </div>
  );
}

const periods = [
  ['分时', 'w-[81px]'],
  ['日K', 'w-[65px] ml-[79px]'],
  ['周K', 'w-[67px] ml-[75px]'],
  ['月K', 'w-[66px] ml-[76px]'],
  ['五日', 'w-[80px] ml-[74px]'],
  ['更多', 'w-[81px] ml-[80px]'],
];

function PeriodTabs() {
  return (
    <div className="flex h-[97px] items-center border-b-2 border-[#e8e8e8] pl-[35px]">
      {periods.map(([label, cls], i) => (
        <div key={label} className={clsx(cls, 'relative flex h-full items-center justify-center')}>
          <span className={clsx(cjk, 'text-[41px] leading-none whitespace-nowrap', i === 1 ? 'font-medium text-[#2b2b2b]' : 'text-[#666]')}>{label}</span>
          {i === 1 && <span className="absolute bottom-[-1px] left-1/2 h-[9px] w-[37px] -translate-x-1/2 rounded-full bg-[#e63030]" />}
        </div>
      ))}
      <Caret className="ml-[10px] h-[18px] w-[23px] text-[#a0a0a0]" />
      <svg className="ml-[103px] h-[46px] w-[50px]" viewBox="0 0 50 46">
        <path d="M14 2H36Q38 2 39 4L47 20Q48 23 47 26L39 42Q38 44 36 44H14Q12 44 11 42L3 26Q2 23 3 20L11 4Q12 2 14 2Z" fill="none" stroke="#999" strokeWidth="4" />
        <circle cx="25" cy="23" r="7" fill="none" stroke="#999" strokeWidth="4" />
      </svg>
    </div>
  );
}

function MaLegend() {
  return (
    <div className="flex h-[94px] items-start pt-[6px] pr-[20px] pl-[18px]">
      <div className={clsx(cjk, 'mt-[17px] flex h-[50px] w-[114px] shrink-0 items-center rounded-[6px] bg-[#f2f2f2] pl-[10px] text-[32px] leading-[46px] text-[#333]')}>
        <span className="mt-[-3px]">均线</span>
        <Caret className="ml-[10px] h-[13px] w-[18px] text-[#666]" />
      </div>
      <div className={clsx(num, 'mt-[4px] ml-[14px] grow text-[33px] leading-[41px] font-medium tracking-[-1.7px] whitespace-nowrap')}>
        <div className="flex h-[41px] gap-[27px]">
          <span className="text-[32px] font-normal tracking-normal text-[#333]">日线</span>
          <span className="text-[#141414]">M5:8.57</span>
          <span className="text-[#dd9d22]">M10:8.56</span>
          <span className="text-[#e7697b]">M20:8.59</span>
          <span className="text-[#6fbf50]">M30:8.80</span>
        </div>
        <div className="flex h-[41px] gap-[27px]">
          <span className="text-[#3a76a3]">M60:8.48</span>
          <span className="text-[#4b174d]">M120:8.06</span>
          <span className="text-[#b04e39]">M240:9.07</span>
        </div>
      </div>
      <span className={clsx(cjk, 'mt-[1px] text-[32px] leading-[41px] text-[#444]')}>前复权</span>
    </div>
  );
}

const tools = [
  'M0 -17L-17 0L0 17M15 -17L-2 0L15 17',
  'M0 -17V17M-17 0H17',
  'M-17 0H17',
  'M6 -17L-11 0L6 17',
  'M-6 -17L11 0L-6 17',
  'M-16 -1V-17H0M2 17H18V1',
];

function KChart() {
  return (
    <svg className="ml-[12px] block h-[702px] w-[1056px] overflow-visible" viewBox="12 794 1056 702">
      <rect x="13" y="795" width="1054" height="700" fill="#fff" stroke="#ebebeb" strokeWidth="2" />
      <path d="M13 969.500H1066M13 1145H1066M13 1320.500H1066" stroke="#dedede" strokeWidth="1.500" strokeDasharray="5 4" />
      <path d="M13 1306H1066" stroke="#b9aa80" strokeWidth="2" strokeDasharray="7 5" />
      {candles.map((c, i) => (
        <rect key={i} x={c.x - 1.5} y={c.top} width={c.up ? 3.8 : 3} height={Math.max(3, c.bottom - c.top)} fill={c.up ? RED : GREEN} />
      ))}
      <g fill="none" strokeWidth="3.100" strokeLinejoin="round">
        {maLines.map((l) => (
          <path key={l.color} d={smooth(l.points)} stroke={l.color} />
        ))}
      </g>
      <g fill="#999" fontFamily="Roboto" fontSize="35" fontWeight="500" fillOpacity=".95">
        <text x="26" y="837" textLength="79" lengthAdjust="spacingAndGlyphs">15.91</text>
        <text x="26" y="987" textLength="79" lengthAdjust="spacingAndGlyphs">13.30</text>
        <text x="26" y="1153" textLength="79" lengthAdjust="spacingAndGlyphs">10.69</text>
        <text x="25" y="1320" textLength="62" lengthAdjust="spacingAndGlyphs">8.08</text>
        <text x="25" y="1478" textLength="62" lengthAdjust="spacingAndGlyphs">5.47</text>
      </g>
      <g fill="#000" fontFamily="Roboto" fontSize="32">
        <text x="476" y="826" textLength="73" lengthAdjust="spacingAndGlyphs">15.46</text>
        <text x="726" y="1493" textLength="58" lengthAdjust="spacingAndGlyphs">5.92</text>
      </g>
      <path d="M572 807.500H621M605 798.500L622 807.500L605 816.500M805 1482.500H855M838 1473.500L856 1482.500L838 1491.500" fill="none" stroke="#000" strokeWidth="3" />
      {tools.map((d, i) => (
        <g key={d} transform={`translate(${57 + i * 176} 1451)`}>
          <circle r="36" fill="#e2e2e2" fillOpacity=".68" />
          <path d={d} fill="none" stroke="#5c5c5c" strokeWidth="3.600" />
        </g>
      ))}
    </svg>
  );
}

function DateAxis() {
  return (
    <div className="h-[78px] bg-[linear-gradient(90deg,#fff_2%,rgba(255,255,255,0)_26%),linear-gradient(180deg,#ececec_0%,#f7f7f7_60%,#fdfdfd_100%)]">
      <svg className="block h-[78px] w-full" viewBox="0 1496 1080 78">
        <path d="M275 1496V1511M540 1496V1511M803 1496V1511M1066 1496V1511" stroke="#888" strokeWidth="3" />
        <g fill="#858585" fontFamily="Roboto" fontSize="35" fontWeight="500">
          <text x="12" y="1549" fill="#666" textLength="195" lengthAdjust="spacing">2024−02−02</text>
          <text x="227" y="1549" textLength="97" lengthAdjust="spacing">
            <tspan fill="#bdbdbd">0</tspan>
            <tspan fill="#a2a2a2">6</tspan>−20
          </text>
          <text x="492" y="1549" textLength="95" lengthAdjust="spacing">10−31</text>
          <text x="754" y="1549" textLength="98" lengthAdjust="spacing">03−13</text>
          <text x="970" y="1549" textLength="98" lengthAdjust="spacing">07−23</text>
        </g>
      </svg>
    </div>
  );
}

function Macd() {
  return (
    <div className="relative ml-[12px] h-[246px] w-[1056px] border-2 border-[#ebebeb] bg-white">
      <svg className="absolute top-0 left-0 h-[242px] w-[1052px]" viewBox="14 1576 1052 242">
        <path d="M14 1697H1066" stroke="#e6e6e6" strokeWidth="2" strokeDasharray="4 4" />
        <path d="M14 1705H1066" stroke="#bfe0b5" strokeWidth="1" />
        {days.map((x) => {
          const v = valueAt(histPts, x);
          return <rect key={x} x={x - 1.2} y={v > 0 ? 1705 - v : 1705} width="2.800" height={Math.max(0.5, Math.abs(v))} fill={v > 0 ? '#e73230' : '#36981f'} />;
        })}
        <path d={smooth(diffLine)} fill="none" stroke="#2c2c2c" strokeWidth="2.800" />
        <path d={smooth(deaLine)} fill="none" stroke="#e57a4a" strokeWidth="2.800" />
      </svg>
      <div className={clsx(num, 'relative flex items-center pt-[10px] pl-[10px] text-[36px] leading-[48px] whitespace-nowrap')}>
        <div className="flex h-[48px] w-[299px] items-center rounded-[6px] bg-[#f2f2f2] pl-[12px] text-[#333]">
          <span className="w-[245px]">MACD(12,26,9)</span>
          <Caret className="ml-[9px] h-[13px] w-[18px] text-[#666]" />
        </div>
        <svg className="ml-[9px] size-[36px]" viewBox="0 0 36 36">
          <circle cx="18" cy="18" r="16.500" fill="none" stroke="#bdbdbd" strokeWidth="2.500" />
          <path d="M13 15Q13 10 18 10T23 15Q23 18 18 20V23" fill="none" stroke="#bdbdbd" strokeWidth="2.500" />
          <circle cx="18" cy="27" r="1.600" fill="#bdbdbd" />
        </svg>
        <span className="ml-[17px] w-[216px] text-[#339922]">MACD:−0.03</span>
        <span className="text-[#333]">DIFF:−0.06</span>
        <span className={clsx(cjk, 'absolute right-[11px] mt-[-3px] text-[36px] tracking-[-0.3px] text-[#4a8fe0]')}>查看暗盘资金</span>
      </div>
      <div className={clsx(num, 'relative mt-[-6px] pl-[10px] text-[37px] leading-[44px] text-[#ec7844]')}>DEA:−0.05</div>
    </div>
  );
}

function Turnover() {
  return (
    <div className="relative mt-[11px] ml-[12px] h-[248px] w-[1056px] border-2 border-[#ebebeb] bg-white">
      <div className={clsx(num, 'flex items-center pt-[10px] pl-[10px] text-[36px] leading-[48px] font-medium whitespace-nowrap')}>
        <div className="flex h-[48px] w-[162px] items-center rounded-[6px] bg-[#f2f2f2] pl-[12px] text-[35px] font-normal text-[#333]">
          成交额
          <Caret className="ml-[10px] h-[13px] w-[18px] text-[#666]" />
        </div>
        <span className="mt-[4px] ml-[13px] w-[202px] tracking-[-1.4px] text-[#35661f]">额:3065.6万</span>
        <span className="mt-[4px] w-[214px] tracking-[-1.6px] text-[#141414]">M5:2404.1万</span>
        <span className="mt-[4px] tracking-[-1.5px] text-[#dd9d22]">M10:2024.6万</span>
      </div>
      <div className={clsx(num, 'mt-[-7px] pl-[10px] text-[36px] leading-[44px] text-[#333]')}>
        换手率:<span className="font-medium tracking-[-1.2px] text-[#4aa8e0]">2.76%</span>
      </div>
      <svg className="absolute top-0 left-0 h-[246px] w-[1052px]" viewBox="14 1833 1052 246">
        <path d="M14 1955H1066" stroke="#e6e6e6" strokeWidth="2" strokeDasharray="4 4" />
        {volumes.map((v) => (
          <rect key={v.x} x={v.x - 1.5} y={v.top} width={v.up ? 3.3 : 2} height={2079 - v.top} fill={v.up ? '#e73230' : '#4f7d37'} />
        ))}
        <path d={smooth(vol5)} fill="none" stroke="#141414" strokeWidth="2.800" />
        <path d={smooth(vol10)} fill="none" stroke="#dd9d22" strokeWidth="2.800" />
      </svg>
    </div>
  );
}

const infoTabs = [
  ['看点', 'w-[84px]'],
  ['资讯', 'w-[85px] ml-[72px]'],
  ['盘口', 'w-[94px] ml-[66px]'],
  ['资金', 'w-[86px] ml-[67px]'],
  ['社区', 'w-[86px] ml-[70px]'],
  ['简况(F10)', 'w-[190px] ml-[68px]'],
];

function InfoTabs() {
  return (
    <div className="flex h-[121px] border-b-2 border-[#c9c9c9] pl-[47px]">
      {infoTabs.map(([label, cls], i) => (
        <div key={label} className={clsx(cls, 'relative flex h-full items-center justify-center')}>
          <span className={clsx(cjk, 'leading-none whitespace-nowrap', i === 2 ? 'text-[48px] font-bold text-[#2b2b2b]' : 'text-[44px] text-[#666]')}>{label}</span>
          {i === 2 && <span className="absolute bottom-0 left-1/2 h-[12px] w-[60px] -translate-x-1/2 rounded-full bg-[#fb3a30]" />}
        </div>
      ))}
    </div>
  );
}

const actions = [
  {
    label: '下单',
    icon: (
      <>
        <path d="M9 2H43Q49 2 49 8V41L38 54H9Q3 54 3 48V8Q3 2 9 2Z" />
        <path d="M9 15H43M9 22.500H43M9 30H43M9 37H33" strokeWidth="3" />
      </>
    ),
  },
  {
    label: '诊股',
    icon: (
      <>
        <path d="M5 10H47Q54 10 54 17V45Q54 52 47 52H5Q-2 52 -2 45V17Q-2 10 5 10ZM26 21V41M16 31H36M15 5H37M7 54H16M36 54H45" />
      </>
    ),
  },
  {
    label: '删自选',
    icon: <path d="M2 4H50V52H2ZM13 28H39" />,
  },
  {
    label: '功能',
    icon: (
      <>
        <circle cx="26" cy="28" r="24.500" />
        <path d="M15 21H37M15 35H37" strokeWidth="3.400" />
      </>
    ),
  },
];

function BottomBar() {
  return (
    <div className="relative flex h-[153px] bg-[#252525]">
      <div className="flex w-[248px] flex-col items-center pt-[12px]">
        <svg className="h-[15px] w-[27px]" viewBox="0 0 27 15">
          <path d="M13.500 0L27 15H0Z" fill="#b4b4b4" />
        </svg>
        <span className={clsx(cjk, 'mt-[16px] text-[36px] leading-[38px] text-[#8b8b93]')}>建筑装饰</span>
        <span className={clsx(num, 'mt-[23px] text-[38px] leading-[42px] tracking-[-0.6px] text-[#1fe81f]')}>-1.13%</span>
      </div>
      {actions.map((a) => (
        <div key={a.label} className="flex w-[208px] flex-col items-center pt-[23px]">
          <svg className="h-[56px] w-[60px]" viewBox="-4 0 60 56" fill="none" stroke="#d6d6d6" strokeWidth="2.800">
            {a.icon}
          </svg>
          <span className={clsx(cjk, 'mt-[7px] text-[36px] leading-[38px] text-[#d6d6d6]')}>{a.label}</span>
        </div>
      ))}
      <span className="absolute bottom-[3px] left-[324px] h-[7px] w-[432px] rounded-full bg-[#686868]" />
    </div>
  );
}

export default function App() {
  return (
    <div className="h-[2392px] w-[1080px] overflow-hidden bg-white">
      <div className="bg-[#f23038]">
        <StatusBar />
        <TitleBar />
      </div>
      <Quote />
      <Notice />
      <div className="h-[12px] bg-[#f5f5f5]" />
      <PeriodTabs />
      <MaLegend />
      <KChart />
      <DateAxis />
      <Macd />
      <Turnover />
      <div className="mt-[5px] h-[12px] bg-[#f5f5f5]" />
      <InfoTabs />
      <div className="h-[22px]" />
      <BottomBar />
    </div>
  );
}
